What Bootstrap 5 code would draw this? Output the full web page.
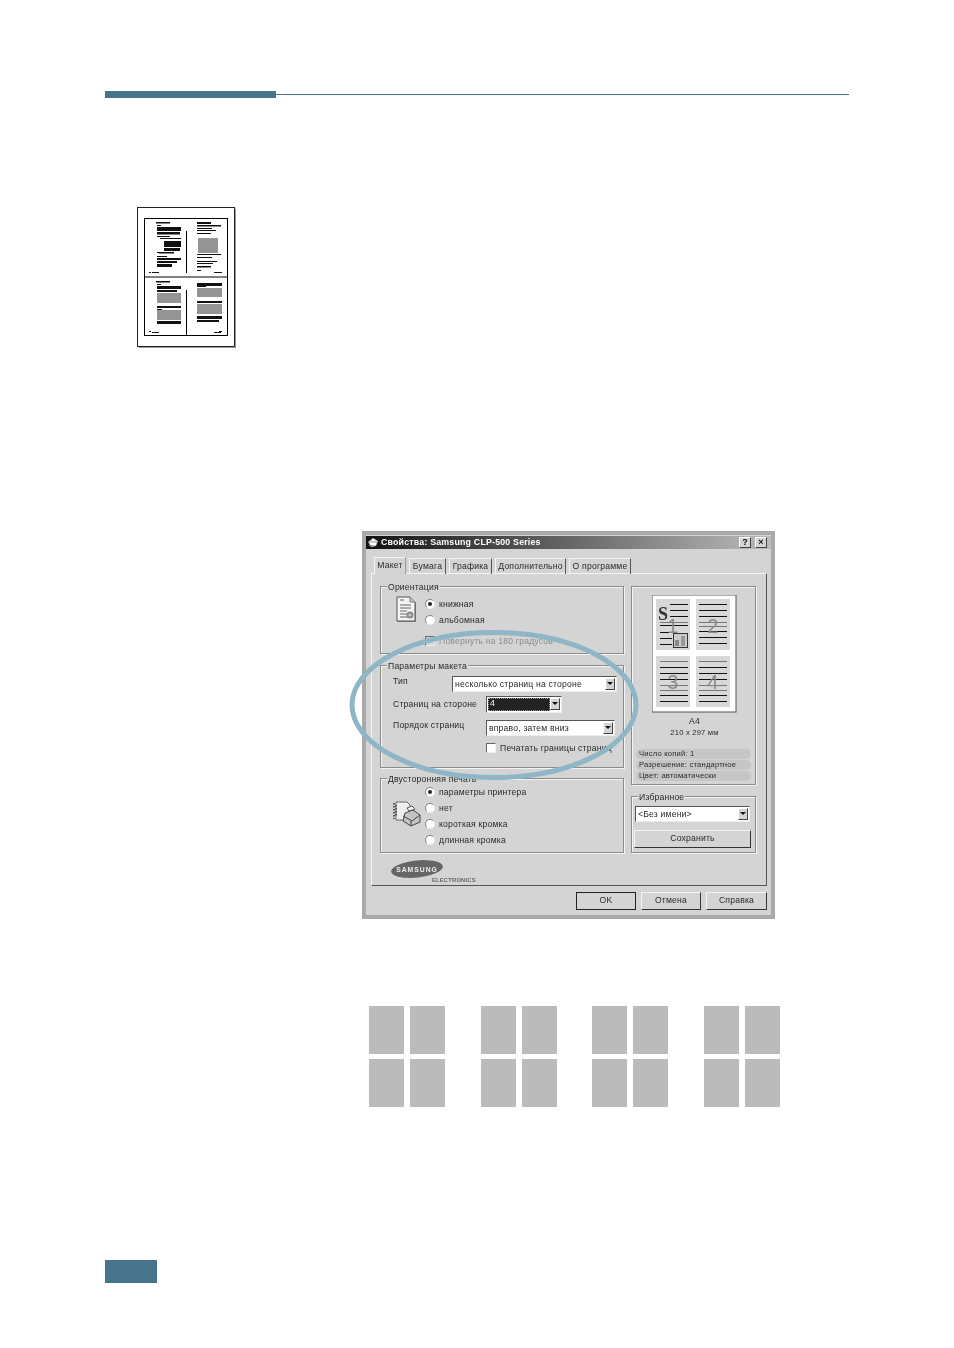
<!DOCTYPE html>
<html lang="ru">
<head>
    <meta charset="UTF-8">
    <title>Свойства: Samsung CLP-500 Series</title>
    <link href="https://cdn.jsdelivr.net/npm/bootstrap@5.3.3/dist/css/bootstrap.min.css" rel="stylesheet">
    <style>
        body { background: #fff; font-family: "Liberation Sans", Arial, sans-serif; }
        .sheet { padding: 91px 105px 0; height: 1348px; overflow: hidden; }

        .rule { height: 7px; width: 744px; }
        .rule-thick { width: 171px; background: #47748a; }
        .rule-thin { flex: 1; height: 1px; margin-top: 3px; background: #47748a; }

        .thumb { display: block; margin: 109px 0 0 32px; }

        /* dialog */
        .dlg { position: relative; width: 413px; height: 388px; margin: 183px 0 0 257px; border: 4px solid #a9a9a9; background: #d4d4d4; font-size: 8.6px; line-height: 10px; color: #2a2a2a; letter-spacing: .2px; filter: blur(.35px); }
        .dlg-title { height: 13px; margin-top: 1px; padding-left: 1px; background: linear-gradient(90deg, #111 0%, #555 40%, #bbb 100%); color: #fff; font-weight: 700; font-size: 8.8px; line-height: 13px; }
        .title-icon { margin-right: 2px; }
        .dlg-btn { width: 12px; height: 11px; background: #d4d4d4; border: 1px solid; border-color: #fff #444 #444 #fff; color: #111; font-size: 9px; line-height: 9px; font-weight: 700; text-align: center; letter-spacing: 0; }
        .tabs { height: 16px; margin-top: 8px; padding-left: 8px; gap: 3px; }
        .tab-item { height: 16px; margin-top: 1px; padding-top: 2px; text-align: center; border: 1px solid; border-color: #f4f4f4 #555 transparent #f4f4f4; border-bottom: 0; }
        .tab-on { margin-top: 0; padding-top: 2px; height: 17px; position: relative; z-index: 2; background: #d4d4d4; border-right-color: #999; }
        .tab-w1 { width: 32px; }
        .tab-w2 { width: 37px; }
        .tab-w3 { width: 43px; }
        .tab-w4 { width: 71px; }
        .tab-w5 { width: 62px; }
        .panel { width: 396px; height: 313px; margin-left: 5px; padding: 12px 8px 0; border: 1px solid; border-color: #f4f4f4 #555 #555 #f4f4f4; }
        .cols { column-gap: 7px; }
        .col-l { width: 244px; }
        .col-r { width: 125px; }
        .grp { position: relative; border: 1px solid #8a8a8a; box-shadow: 1px 1px 0 #f4f4f4, inset 1px 1px 0 #f4f4f4; }
        .grp-name { position: absolute; top: -5px; left: 6px; padding: 0 1px; background: #d4d4d4; }
        .g-orient { height: 68px; margin-bottom: 11px; padding: 9px 0 0 15px; }
        .orient-opts { margin-left: 9px; }
        .opt-far { margin-top: 5px; }
        .g-layout { height: 103px; margin-bottom: 10px; padding: 10px 0 0 12px; }
        .g-duplex { height: 75px; padding: 5px 0 0 12px; }
        .g-preview { height: 199px; margin-bottom: 11px; padding: 8px 0 0 4px; }
        .g-fav { height: 57px; padding: 9px 0 0 3px; }

        .opt { height: 16px; gap: 4px; }
        .radio-mark { position: relative; flex: none; width: 10px; height: 10px; border-radius: 50%; background: #fff; border: 1px solid #888; border-right-color: #eee; border-bottom-color: #eee; }
        .radio-on::after { content: ""; position: absolute; left: 2px; top: 2px; width: 4px; height: 4px; border-radius: 50%; background: #222; }
        .check-mark { flex: none; width: 10px; height: 10px; background: #fff; border: 1px solid #666; border-right-color: #eee; border-bottom-color: #eee; }
        .check-off { background: #d4d4d4; }
        .txt-off { color: #8c8c8c; }

        .lbl { width: 93px; flex: none; }
        .lbl-short { width: 59px; }
        .lbl-low { margin-top: 3px; }
        .row-third { margin-top: 7px; }
        .row-check { padding-left: 93px; }
        .combo { height: 16px; padding: 1px 1px 1px 2px; background: #fff; border: 1px solid; border-color: #555 #eee #eee #555; line-height: 12px; }
        .combo-w1 { width: 165px; }
        .combo-w2 { width: 76px; height: 17px; padding-left: 1px; }
        .combo-w3 { width: 129px; }
        .combo-w4 { width: 115px; margin-bottom: 8px; }
        .combo-sel { flex: 1; background: #222; color: #fff; padding-left: 1px; border: 1px dotted #999; line-height: 9px; }
        .combo-arrow { flex: none; width: 10px; height: 12px; background: #d4d4d4; border: 1px solid; border-color: #fff #444 #444 #fff; }
        .combo-arrow::after { content: ""; display: block; width: 0; margin: 3px auto 0; border: 3px solid transparent; border-top: 3px solid #111; border-bottom: 0; }

        .page-cap { width: 85px; text-align: center; margin-left: 16px; margin-top: 3px; }
        .page-size { margin-top: 2px; margin-bottom: 11px; font-size: 7.6px; }
        .pill { width: 115px; height: 10px; padding-left: 3px; margin-bottom: 1px; border-radius: 5px; background: #c6c6c6; font-size: 7.6px; line-height: 10px; white-space: nowrap; }
        .logo { margin: 7px 0 0 11px; }
        .dlg-foot { column-gap: 5px; margin: 6px 4px 0 0; }
        .win-btn { width: 60px; height: 18px; background: #d4d4d4; border: 1px solid; border-color: #f4f4f4 #333 #333 #f4f4f4; text-align: center; line-height: 15px; }
        .win-btn-def { outline: 1px solid #222; outline-offset: -1px; }
        .win-btn-wide { width: 61px; }
        .win-btn-fav { width: 117px; margin-left: -1px; }

        .halo { position: absolute; left: -19px; top: 92px; pointer-events: none; }

        /* n-up tiles */
        .tiles { margin: 87px 0 0 264px; width: 411px; }
        .tile-set { display: grid; grid-template-columns: 35px 35px; grid-auto-rows: 48px; gap: 5px 6px; }
        .tile { background: #bbb; }

        .pg-box { width: 52px; height: 23px; margin-top: 153px; background: #47748a; }
    </style>
</head>
<body>
<div class="sheet">
    <div class="rule d-flex">
        <div class="rule-thick"></div>
        <div class="rule-thin"></div>
    </div>

    <svg class="thumb" width="99" height="141" viewBox="137 207 99 141">
        <rect x="139" y="209" width="97" height="139" fill="#999"/>
        <rect x="137.500" y="207.500" width="97" height="139" fill="#fff" stroke="#222"/>
        <rect x="144.500" y="218.500" width="83" height="117" fill="#fff" stroke="#000"/>
        <path d="M144 277h84M186.500 231v42M186.500 290v45" stroke="#000"/>
        <g fill="#111">
            <rect x="156" y="222" width="14" height="1.500"/><rect x="157" y="225" width="4" height="1"/>
            <rect x="157" y="227" width="24" height="4"/><rect x="157" y="232" width="23" height="2.500"/>
            <rect x="157" y="236" width="13" height="1"/><rect x="160" y="238" width="21" height="1"/>
            <rect x="164" y="241" width="17" height="6"/><rect x="164" y="248" width="16" height="3"/>
            <rect x="157" y="252" width="2" height="1"/><rect x="159" y="252" width="15" height="1.500"/>
            <rect x="157" y="256" width="10" height="1"/><rect x="157" y="258" width="24" height="2"/>
            <rect x="157" y="261" width="20" height="2"/><rect x="157" y="264" width="15" height="3"/>
            <rect x="149" y="272" width="2" height="1"/><rect x="152" y="272" width="7" height="1"/>
            <rect x="197" y="222" width="14" height="2"/><rect x="197" y="225" width="24" height="1.500"/>
            <rect x="197" y="228" width="15" height="1"/><rect x="197" y="230" width="19" height="1"/>
            <rect x="197" y="233" width="14" height="1"/><rect x="197" y="254" width="24" height="1"/>
            <rect x="197" y="257" width="15" height="1"/><rect x="197" y="261" width="20" height="1"/>
            <rect x="197" y="263" width="16" height="1"/><rect x="197" y="266" width="14" height="1.500"/>
            <rect x="197" y="270" width="4" height="1"/><rect x="214" y="272" width="8" height="1"/>
            <rect x="156" y="281" width="14" height="1.500"/><rect x="157" y="284" width="4" height="1"/>
            <rect x="157" y="286" width="24" height="3"/><rect x="157" y="290" width="20" height="2"/>
            <rect x="157" y="306" width="24" height="2"/><rect x="157" y="309" width="5" height="1"/>
            <rect x="157" y="321" width="24" height="3"/><rect x="149" y="331" width="2" height="1"/><rect x="152" y="332" width="7" height="1"/>
            <rect x="197" y="283" width="25" height="3"/><rect x="197" y="286" width="9" height="1"/>
            <rect x="197" y="301" width="25" height="2"/><rect x="197" y="304" width="8" height="1"/>
            <rect x="197" y="316" width="25" height="3"/><rect x="197" y="320" width="22" height="2"/>
            <rect x="214" y="332" width="7" height="1"/><rect x="219" y="331" width="3" height="1"/>
        </g>
        <g fill="#949494">
            <rect x="198" y="238" width="20" height="15"/>
            <rect x="157" y="293" width="24" height="10"/><rect x="157" y="310" width="24" height="10"/>
            <rect x="197" y="288" width="25" height="9"/><rect x="197" y="304" width="25" height="10"/>
        </g>
    </svg>

    <div class="dlg">
        <div class="dlg-title d-flex align-items-center">
            <svg width="12" height="11" viewBox="0 0 12 11" class="title-icon">
                <path d="M1 5l5-4 5 3-2 5-5 1z" fill="#c8c8c8"/><path d="M3 6h6v2H3zM5 2h3v2H5z" fill="#fff"/><path d="M1 8l3 2 1-2z" fill="#777"/>
            </svg>
            <span class="flex-grow-1">Свойства: Samsung CLP-500 Series</span>
            <div class="dlg-btn">?</div>
            <div class="dlg-btn ms-1 me-1">×</div>
        </div>

        <div class="tabs d-flex">
            <div class="tab-item tab-on tab-w1">Макет</div>
            <div class="tab-item tab-w2">Бумага</div>
            <div class="tab-item tab-w3">Графика</div>
            <div class="tab-item tab-w4">Дополнительно</div>
            <div class="tab-item tab-w5">О программе</div>
        </div>

        <div class="panel">
            <div class="cols d-flex">
                <div class="col-l">
                    <div class="grp g-orient d-flex">
                        <span class="grp-name">Ориентация</span>
                        <svg width="20" height="26" viewBox="0 0 20 26" class="flex-shrink-0">
                            <path d="M2 2h13l5 5v19H2z" fill="#888"/>
                            <path d="M1 1h13l5 5v19H1z" fill="#f4f4f4" stroke="#555"/>
                            <path d="M14 1v5h5" fill="#ccc" stroke="#777"/>
                            <path d="M4 4h4M4 9h11M4 12h11M4 15h7M4 18h7M4 21h8" stroke="#666"/>
                            <circle cx="14" cy="19" r="3.500" fill="#888"/><circle cx="14" cy="19" r="1.500" fill="#ccc"/>
                        </svg>
                        <div class="orient-opts">
                            <div class="opt d-flex align-items-center"><span class="radio-mark radio-on"></span><span>книжная</span></div>
                            <div class="opt d-flex align-items-center"><span class="radio-mark"></span><span>альбомная</span></div>
                            <div class="opt opt-far d-flex align-items-center"><span class="check-mark check-off"></span><span class="txt-off">Повернуть на 180 градусов</span></div>
                        </div>
                    </div>

                    <div class="grp g-layout">
                        <span class="grp-name">Параметры макета</span>
                        <div class="d-flex mb-1">
                            <span class="lbl lbl-short">Тип</span>
                            <div class="combo combo-w1 d-flex justify-content-between"><span>несколько страниц на стороне</span><span class="combo-arrow"></span></div>
                        </div>
                        <div class="d-flex mb-1">
                            <span class="lbl lbl-low">Страниц на стороне</span>
                            <div class="combo combo-w2 d-flex"><span class="combo-sel">4</span><span class="combo-arrow"></span></div>
                        </div>
                        <div class="row-third d-flex">
                            <span class="lbl">Порядок страниц</span>
                            <div class="combo combo-w3 d-flex justify-content-between"><span>вправо, затем вниз</span><span class="combo-arrow"></span></div>
                        </div>
                        <div class="opt row-check d-flex align-items-center mt-1">
                            <span class="check-mark"></span><span>Печатать границы страниц</span>
                        </div>
                    </div>

                    <div class="grp g-duplex d-flex">
                        <span class="grp-name">Двусторонняя печать</span>
                        <svg width="28" height="28" viewBox="0 0 28 28" class="mt-3 me-1 flex-shrink-0">
                            <path d="M3 2h11l3 3v15H3z" fill="#eee" stroke="#666"/>
                            <path d="M1 3v16M3 5v12" stroke="#555" stroke-dasharray="1.500 1.500" stroke-width="2"/>
                            <path d="M12 13l8-3 7 5v7l-9 4-8-5z" fill="#c4c4c4" stroke="#444"/>
                            <path d="M10 16l9 5 8-6M18 21v5" fill="none" stroke="#444"/>
                            <path d="M14 8l5-2 3 3-6 2z" fill="#fff" stroke="#555"/>
                        </svg>
                        <div>
                            <div class="opt d-flex align-items-center"><span class="radio-mark radio-on"></span><span>параметры принтера</span></div>
                            <div class="opt d-flex align-items-center"><span class="radio-mark"></span><span>нет</span></div>
                            <div class="opt d-flex align-items-center"><span class="radio-mark"></span><span>короткая кромка</span></div>
                            <div class="opt d-flex align-items-center"><span class="radio-mark"></span><span>длинная кромка</span></div>
                        </div>
                    </div>
                </div>

                <div class="col-r">
                    <div class="grp g-preview">
                        <svg width="85" height="118" viewBox="652 595 85 118" class="d-block ms-3">
                            <rect x="652" y="595" width="84" height="117" fill="#fff" stroke="#555"/>
                            <g fill="#d8d8d8">
                                <rect x="656" y="599" width="34" height="51"/><rect x="696" y="599" width="34" height="51"/>
                                <rect x="656" y="656" width="34" height="51"/><rect x="696" y="656" width="34" height="51"/>
                            </g>
                            <g stroke="#111">
                                <path d="M670 604.500h18M670 610.500h18M670 616.500h18M660 638.500h12M660 644.500h12M660 632.500h12M660 625.500h28"/>
                                <path d="M699 604.500h28M699 610.500h28M699 616.500h28M699 631.500h28M699 637.500h28M699 643.500h28"/>
                                <path d="M660 667.500h28M660 673.500h28M660 679.500h28M660 695.500h28M660 701.500h28"/>
                                <path d="M699 667.500h28M699 673.500h28M699 679.500h28M699 695.500h28M699 701.500h28"/>
                            </g>
                            <g stroke="#777">
                                <path d="M660 622.500h28M699 622.500h28M699 626.500h28M660 661.500h28M699 661.500h28M660 685.500h28M660 690.500h28M699 685.500h28M699 690.500h28"/>
                            </g>
                            <text x="658" y="620" font-family="Liberation Serif, serif" font-weight="700" font-size="18" fill="#333">S</text>
                            <g font-family="Liberation Sans, sans-serif" font-size="20" fill="#8a8a8a" text-anchor="middle">
                                <text x="673" y="633">1</text><text x="713" y="633">2</text>
                                <text x="673" y="689">3</text><text x="713" y="689">4</text>
                            </g>
                            <rect x="673.500" y="633.500" width="14" height="14" fill="#ccc" stroke="#333"/>
                            <rect x="675" y="640" width="4" height="6" fill="#888"/><rect x="681" y="636" width="4" height="10" fill="#999"/>
                        </svg>
                        <div class="page-cap">A4</div>
                        <div class="page-cap page-size">210 x 297 мм</div>
                        <div class="pill">Число копий: 1</div>
                        <div class="pill">Разрешение: стандартное</div>
                        <div class="pill">Цвет: автоматически</div>
                    </div>
                    <div class="grp g-fav">
                        <span class="grp-name">Избранное</span>
                        <div class="combo combo-w4 d-flex justify-content-between"><span>&lt;Без имени&gt;</span><span class="combo-arrow"></span></div>
                        <div class="win-btn win-btn-fav">Сохранить</div>
                    </div>
                </div>
            </div>

            <svg width="90" height="26" viewBox="0 0 90 26" class="logo d-block">
                <ellipse cx="26" cy="9" rx="26" ry="8.500" transform="rotate(-6 26 9)" fill="#666"/>
                <text x="26" y="11.500" text-anchor="middle" font-family="Liberation Sans, sans-serif" font-weight="700" font-size="6.800" letter-spacing="1" fill="#eee">SAMSUNG</text>
                <text x="41" y="22" font-family="Liberation Sans, sans-serif" font-weight="700" font-size="5.800" fill="#666">ELECTRONICS</text>
            </svg>
        </div>

        <div class="dlg-foot d-flex justify-content-end">
            <div class="win-btn win-btn-def">OK</div>
            <div class="win-btn">Отмена</div>
            <div class="win-btn win-btn-wide">Справка</div>
        </div>

        <svg class="halo" width="295" height="156" viewBox="0 0 295 156">
            <ellipse cx="147" cy="78" rx="142" ry="72.500" fill="none" stroke="#8fb6c6" stroke-width="5"/>
        </svg>
    </div>

    <div class="tiles d-flex justify-content-between">
        <div class="tile-set"><div class="tile"></div><div class="tile"></div><div class="tile"></div><div class="tile"></div></div>
        <div class="tile-set"><div class="tile"></div><div class="tile"></div><div class="tile"></div><div class="tile"></div></div>
        <div class="tile-set"><div class="tile"></div><div class="tile"></div><div class="tile"></div><div class="tile"></div></div>
        <div class="tile-set"><div class="tile"></div><div class="tile"></div><div class="tile"></div><div class="tile"></div></div>
    </div>

    <div class="pg-box"></div>
</div>
<script src="https://cdn.jsdelivr.net/npm/bootstrap@5.3.3/dist/js/bootstrap.bundle.min.js"></script>
</body>
</html>
